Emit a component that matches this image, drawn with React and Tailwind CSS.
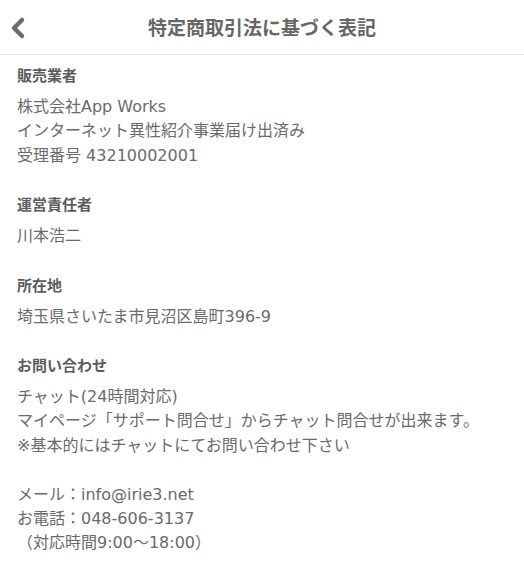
import React from 'react';

const font = { fontFamily: '"DejaVu Sans", "Noto Sans CJK JP", sans-serif' };

const sections = [
  {
    title: '販売業者',
    lines: ['株式会社App Works', 'インターネット異性紹介事業届け出済み', '受理番号 43210002001'],
  },
  { title: '運営責任者', lines: ['川本浩二'] },
  { title: '所在地', lines: ['埼玉県さいたま市見沼区島町396-9'] },
  {
    title: 'お問い合わせ',
    lines: [
      'チャット(24時間対応)',
      'マイページ「サポート問合せ」からチャット問合せが出来ます。',
      '※基本的にはチャットにてお問い合わせ下さい',
      '\u00a0',
      'メール：info@irie3.net',
      'お電話：048-606-3137',
      '（対応時間9:00〜18:00）',
    ],
  },
];

export default function App() {
  return (
    <div className="w-[524px] h-[576px] bg-white overflow-hidden" style={font}>
      {/* Header */}
      <header className="relative h-[55px] flex items-center justify-center border-b border-[#e2e2e2]">
        <button className="absolute left-[9px] top-[16px] p-0" title="Back">
          <svg width="18" height="24" viewBox="0 0 18 24">
            <polyline points="13,4 5,12 13,20" fill="none" stroke="#6b6b6b" strokeWidth="4.5" strokeLinecap="round" strokeLinejoin="round" />
          </svg>
        </button>
        <h1 className="text-[19px] font-bold text-[#666]" style={{ fontFamily: '"Noto Sans CJK JP", sans-serif' }}>
          特定商取引法に基づく表記
        </h1>
      </header>

      {/* Content */}
      <div className="px-[17px] pt-[8px] flex flex-col gap-[24px]">
        {sections.map((s) => (
          <section key={s.title}>
            <h2 className="text-[15px] font-bold leading-[24px] text-[#5c5c5c]" style={{ fontFamily: '"Noto Sans CJK JP", sans-serif' }}>
              {s.title}
            </h2>
            <div className="mt-[8px] text-[16px] leading-[24.4px] text-[#6a6a6a] whitespace-nowrap">
              {s.lines.map((l, i) => (
                <p key={i}>{l}</p>
              ))}
            </div>
          </section>
        ))}
      </div>
    </div>
  );
}
